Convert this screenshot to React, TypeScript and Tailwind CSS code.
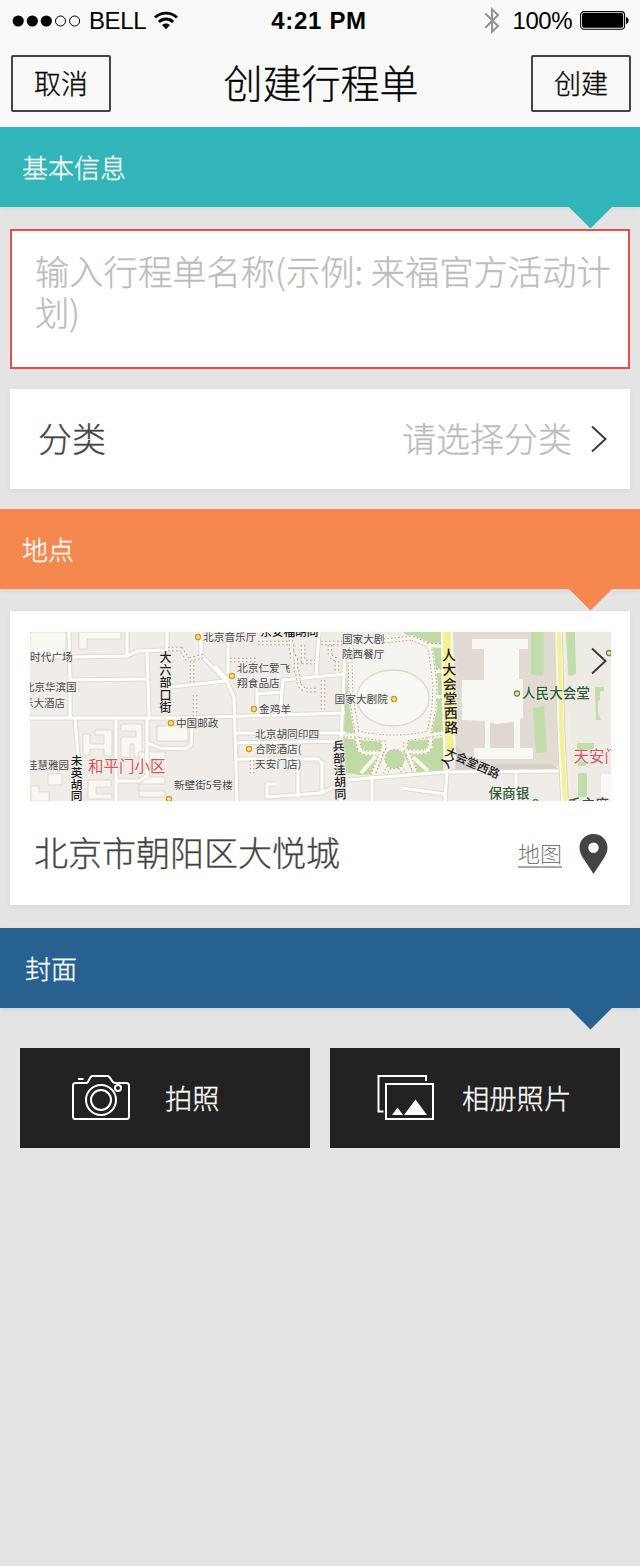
import type { ReactNode } from "react";

function Wifi() {
  return (
    <svg width="26" height="20" viewBox="0 0 26 20" fill="none" stroke="#000" strokeWidth="2.8">
      <path d="M2 6.6C8.2.6 17.8.6 24 6.6" />
      <path d="M5.9 10.9C10 7 16 7 20.1 10.9" />
      <path d="M13 18.2l-4-4.1c2.2-2.2 5.8-2.2 8 0z" fill="#000" stroke="none" />
    </svg>
  );
}

function StatusBar() {
  return (
    <div className="grid h-[41px] grid-cols-[1fr_auto_1fr] items-center pl-3 pr-[11px] text-[24px] leading-none text-black">
      <div className="flex items-center">
        <svg width="69" height="12" viewBox="0 0 69 12">
          {[6.2, 20.3, 34.3].map((x) => (
            <circle key={x} cx={x} cy="6" r="5.6" />
          ))}
          {[48.5, 62.6].map((x) => (
            <circle key={x} cx={x} cy="6" r="5" fill="none" stroke="#000" />
          ))}
        </svg>
        <span className="ml-[8px] w-[57px] tracking-[-0.4px]">BELL</span>
        <span className="ml-[7px]"><Wifi /></span>
      </div>
      <div className="mr-[3px] text-[24px] font-bold tracking-[0.7px]">4:21 PM</div>
      <div className="flex items-center justify-end">
        <svg width="16" height="28" viewBox="0 0 16 28" fill="none" stroke="#929292" strokeWidth="2">
          <path d="M1.3 6.5L14 19l-6 5.7V2.3L14 8 1.3 20.7" />
        </svg>
        <span className="ml-[13px] mr-[8px] tracking-[-0.5px]">100%</span>
        <svg width="49" height="19" viewBox="0 0 49 19">
          <rect x=".6" y=".6" width="44" height="17.6" rx="3.5" fill="none" stroke="#000" strokeWidth="1.1" />
          <rect x="2" y="2" width="41.2" height="14.8" rx="2" />
          <path d="M46 6c3.6 1 3.6 6 0 7z" />
        </svg>
      </div>
    </div>
  );
}

function NavButton({ children }: { children: ReactNode }) {
  return (
    <button className="flex h-[57px] w-[100px] items-center justify-center rounded-[2px] border-2 border-[#444] pb-[2px] text-[27px] leading-none font-light text-black">
      {children}
    </button>
  );
}

function Banner({ label, className }: { label: string; className: string }) {
  return (
    <div className={"relative flex h-[80px] shrink-0 items-center pb-px text-[26px] leading-none font-light text-white shadow-[0_2px_5px_rgba(0,0,0,0.06)] " + className}>
      {label}
      <svg className="absolute top-[79px] left-[569px]" width="43" height="23" viewBox="0 0 43 23">
        <path className="fill-[var(--c)]" d="M0 0h43v1L21.5 22.5 0 1z" />
      </svg>
    </div>
  );
}

function Chevron() {
  return (
    <svg width="18" height="28" viewBox="0 0 18 28" fill="none" stroke="#3c3c3c" strokeWidth="2">
      <path d="M2 1.5L15.5 14 2 26.5" />
    </svg>
  );
}

const roads = [
  "M69 632L70 680V718",
  "M70 657L127 656 138 651 167 650V632",
  "M127 632V656",
  "M70 680L147 679",
  "M147 651L149 718",
  "M30 718H178L345 713",
  "M75 718L79 770",
  "M116 718V801",
  "M147 718L147 743 160 748 185 749 191 745 192 728",
  "M147 743V776L139 781H116",
  "M170 687L225 681",
  "M201 632V655L227 682 234 697 237 801",
  "M215 666L228 680",
  "M228 632V674",
  "M319 632L316 677",
  "M257 694L282 692",
  "M257 680V713",
  "M280 714L283 680 345 674",
  "M236 733H345",
  "M236 743L341 741",
  "M237 759H318L322 763V792",
  "M298 760V797",
  "M278 784H267V797L322 793 346 780 447 772 562 771",
  "M345 650L341 742V801",
  "M372 776V801",
  "M402 788L445 794",
  "M447 770L445 801",
  "M516 772V801",
];

const buildings = [
  "M30 632H66V659H30z",
  "M79 632H121V639H87V649H79z",
  "M83 734H90V744H104V735H95V730H112V756H104V749H90V755H83z",
  "M121 724H142V757H134V744H130V757H121V737H136V731H121z",
  "M157 726H188V741H157z",
  "M88 780H111V787H96V794H112V799H88z",
  "M139 752H165V760H150V766H164V771H148V777H165V784H138V791H165V797H139z",
  "M31 786H39V792H49V801H31z",
  "M48 774H62V785H48z",
];

const dashes = [
  "M168 649H181L188 660 203 656",
  "M192 661V684",
  "M195 695V717",
  "M230 660H256",
  "M258 643H292V660",
  "M291 632V650L296 660V674",
  "M303 645V662H315",
  "M297 670L299 685 305 690H318",
  "M323 680V711",
  "M321 643H345",
  "M330 645V656L337 660V673",
  "M252 760V776",
];

const plazaOutline =
  "M384 641L412 638 426 644Q430 647 431 654L435 685 434 708 429 733Q394 741 357 733L351 696 350 660 352 645";

const parkPaths =
  "M357 737L359 748Q361 753 368 753H381L384 748 383 741M431 737L430 747Q428 752 422 752H408L405 748 406 741M381 754L373 775M408 754L416 774M389 767L385 774M400 767L405 774";

const orangePins: [number, number][] = [
  [198, 637], [171, 723], [169, 799], [232, 676], [254, 709], [249, 749], [394, 699],
];

type Label = [string, number, number, number];
const labels: Label[] = [
  ["时代广场", 30, 660.5, 10.7],
  ["北京华滨国", 24, 691, 10.5],
  ["乐大酒店", 23, 706.5, 10.5],
  ["佳慧雅园", 27, 769, 10.5],
  ["北京音乐厅", 203, 641, 10.7],
  ["中国邮政", 176, 727, 10.6],
  ["新壁街5号楼", 174, 788.5, 10.6],
  ["北京仁爱飞", 237, 671.5, 10.7],
  ["翔食品店", 237, 686.5, 10.7],
  ["金鸡羊", 259, 712.5, 10.7],
  ["北京胡同印四", 255, 738, 10.7],
  ["合院酒店(", 255, 753, 10.7],
  ["天安门店)", 255, 768, 10.7],
  ["国家大剧", 342, 643, 10.6],
  ["院西餐厅", 342, 658, 10.6],
  ["国家大剧院", 334.5, 702.5, 10.7],
];

function Street({ text, x, y, size, tilt = 0, gap = 0, halo = "#f2efea" }: { text: string; x: number; y: number; size: number; tilt?: number; gap?: number; halo?: string }) {
  return (
    <text
      x={x}
      y={y}
      fontSize={size}
      letterSpacing={gap}
      fill="#1c1c1c"
      stroke={halo}
      strokeWidth="1.4"
      paintOrder="stroke"
      className="font-medium [writing-mode:vertical-rl]"
      transform={`rotate(${tilt} ${x} ${y})`}
    >
      {text}
    </text>
  );
}

function CityMap() {
  return (
    <svg className="block font-normal" width="581" height="169" viewBox="30 632 581 169">
      <rect x="30" y="632" width="581" height="169" fill="#f0ece7" />
      <g fill="#faf8f3" stroke="#dedacd" strokeWidth="1">
        {buildings.map((d) => <path key={d} d={d} />)}
      </g>

      <path d="M348 660L343 738 346 773 360 775 443 771V632H403L410 638 425 660z" fill="#bddba3" />
      <path d={plazaOutline + "z"} fill="#f5f3ed" stroke="#f8f5ee" strokeWidth="6" />
      <path d="M345 735Q394 743 443 734" fill="none" stroke="#f8f5ee" strokeWidth="6" />
      <path d={plazaOutline} fill="none" stroke="#b8a593" strokeWidth="5" strokeDasharray="1.6 2" />
      <path d="M343 735L357 735Q394 743 430 735L443 733" fill="none" stroke="#b8a593" strokeWidth="5" strokeDasharray="1.6 2" />
      <path d={plazaOutline} fill="none" stroke="#f8f5ee" strokeWidth="3" />
      <path d="M343 735L357 735Q394 743 430 735L443 733" fill="none" stroke="#f8f5ee" strokeWidth="3" />
      <path d="M383 740H406L403 752 413 775H376L385 752z" fill="#f6f3ec" />
      <g fill="none">
        <path d={parkPaths} stroke="#f8f5ee" strokeWidth="5" />
        <path d={parkPaths} stroke="#b8a593" strokeWidth="5" strokeDasharray="1.6 2" />
        <path d={parkPaths} stroke="#f8f5ee" strokeWidth="3" />
        <circle cx="394.5" cy="759" r="9.5" fill="#bddba3" stroke="#b8a593" strokeDasharray="1.6 2" />
        <path d="M361 773L376 756M413 757L428 771" stroke="#f8f5ee" strokeWidth="4" />
      </g>
      <ellipse cx="393" cy="698" rx="36" ry="28" fill="#f9f8f4" stroke="#dedaca" strokeWidth="1.3" />

      <path d="M451 632H557L559 760Q558 770 550 771L458 774 452 750z" fill="#e1dbd3" />
      <path d="M455 772L560 770 551 764H475L456 745z" fill="#d6d0c8" />
      <path d="M472 639H528V649H519V679H523V718H520V748H533V759H474V748H485V721L462 720V680H484V649H472z" fill="#f8f7f2" />
      <path d="M490 722L496 724 514 722V748H490z" fill="#dfd8cf" />
      <path d="M567 632H611V801H571z" fill="#eeebe5" />
      <path d="M601 774H611V801H601z" fill="#fbf9f6" />
      <g fill="#c0dea9">
        <rect x="531" y="628" width="12.5" height="47" rx="2" />
        <path d="M533 708l11-2 3 46-11 1z" />
        <path d="M566 632h9l1 42q-6 3-8 0z" />
        <path d="M595 687h9v4h-4v8l-2 3v12l3 6h-5z" />
        <rect x="577" y="743" width="17" height="7" />
        <rect x="578" y="773" width="9" height="24" rx="2" />
        <rect x="578" y="760" width="8" height="6" />
      </g>

      <g fill="none" strokeLinejoin="round">
        {roads.map((d) => <path key={d} d={d} stroke="#e0dccb" strokeWidth="5.2" />)}
        {roads.map((d) => <path key={"w" + d} d={d} stroke="#fff" strokeWidth="3" />)}
        {dashes.map((d) => <path key={d} d={d} stroke="#aea382" strokeWidth="4.6" strokeDasharray="1.6 2.4" />)}
        {dashes.map((d) => <path key={"w" + d} d={d} stroke="#f5f2ed" strokeWidth="2.4" />)}
        <path d="M427 645L443 646M436 671H443M436 697H443" stroke="#f8f5ee" strokeWidth="4" />
        <path d="M427 643L443 644M436 669H443M436 699H443" stroke="#b5a894" strokeDasharray="2 2" />
        <path d="M447 632L448 700 450 760" stroke="#fff" strokeWidth="12" />
        <path d="M447 632L448 700 450 755" stroke="#f5ef95" strokeWidth="8.5" />
        <path d="M558.5 632L561 730 564.5 801" stroke="#ddd5ba" strokeWidth="8.5" />
        <path d="M558.5 632L561 730 564.5 801" stroke="#fff" strokeWidth="6.5" />
        <path d="M559 632L561.5 730 565 801" stroke="#f5f09c" strokeWidth="4.6" />
      </g>

      {orangePins.map(([x, y]) => (
        <circle key={x} cx={x} cy={y} r="2.5" fill="#fff2a0" stroke="#d99a26" strokeWidth="1.5" />
      ))}
      <g fill="#eef0a0" stroke="#628f43" strokeWidth="1.3">
        <circle cx="517" cy="693.5" r="2.5" />
        <circle cx="609" cy="653" r="2.5" />
        <circle cx="535.5" cy="802" r="2.5" />
      </g>

      <g fill="#48494e" stroke="#f3f0eb" strokeWidth="1.2" paintOrder="stroke">
        {labels.map(([t, x, y, s]) => <text key={t} x={x} y={y} fontSize={s}>{t}</text>)}
      </g>
      <text x="260" y="636" fontSize="11.7" fill="#1c1c1c" className="font-medium">东安福胡同</text>
      <Street text="大六部口街" x={165.5} y={651.5} size={12} gap={0.5} />
      <Street text="未英胡同" x={76.5} y={755} size={11.7} />
      <Street text="兵部洼胡同" x={338.5} y={740} size={12} tilt={-2} />
      <Street text="人大会堂西路" x={448.5} y={648} size={14} gap={0.5} tilt={-2} halo="#f7f2b0" />
      <text x="441" y="766" fontSize="12" fill="#1c1c1c" className="font-medium" transform="rotate(-65 447 762)">人</text>
      <text x="444" y="755" fontSize="11.7" fill="#1c1c1c" className="font-medium" transform="rotate(24 444 755)">大会堂西路</text>
      <g fill="#2f5c38" stroke="#f3f1ea" strokeWidth="1.5" paintOrder="stroke" className="font-medium">
        <text x="522" y="698" fontSize="13.6">人民大会堂</text>
        <text x="488.5" y="798" fontSize="13.6">保商银</text>
        <text x="568" y="808.5" fontSize="13.6">毛主席</text>
      </g>
      <g fill="#d9535b" stroke="#f6f1ec" strokeWidth="1.5" paintOrder="stroke">
        <text x="88" y="772" fontSize="15.5">和平门小区</text>
        <text x="573.5" y="761.5" fontSize="15.5">天安门</text>
      </g>
    </svg>
  );
}

export default function App() {
  return (
    <div className="flex h-[1566px] w-[640px] flex-col overflow-hidden bg-[#e4e4e4] font-['Liberation_Sans','Noto_Sans_CJK_SC',sans-serif]">
      <header className="h-[127px] shrink-0 bg-[#f9f9f9]">
        <StatusBar />
        <div className="mt-[14px] flex items-start justify-between pl-[11px] pr-[9px] font-['Noto_Sans_CJK_SC',sans-serif] [-webkit-text-stroke:0.3px]">
          <NavButton>取消</NavButton>
          <h1 className="mt-[6px] text-[39px] leading-[40px] font-light text-black">创建行程单</h1>
          <NavButton>创建</NavButton>
        </div>
      </header>

      <main className="flex flex-col font-['Noto_Sans_CJK_SC',sans-serif] font-light [-webkit-text-stroke:0.3px]">
        <Banner label="基本信息" className="bg-[#31b5b8] pl-[22px] [--c:#31b5b8]" />
        <div className="mx-[10px] mt-[22px] h-[140px] border-2 border-[#e94f3f] bg-white pt-[19px] pl-[23px] text-[34.3px] leading-[41px] whitespace-nowrap text-[#bcbcbc]">
          输入行程单名称(示例: 来福官方活动计<br />划)
        </div>
        <div className="mx-[10px] mt-[20px] mb-[20px] flex h-[100px] items-center bg-white pr-[22px] pl-[28px] text-[34px] leading-none shadow-[0_2px_5px_rgba(0,0,0,0.05)]">
          <span className="mb-[3px] text-[#444]">分类</span>
          <span className="mb-[3px] ml-auto mr-[18px] text-[#bcbcbc]">请选择分类</span>
          <Chevron />
        </div>

        <Banner label="地点" className="bg-[#f5884f] pl-[22px] [--c:#f5884f]" />
        <div className="mx-[10px] mt-[22px] h-[294px] bg-white pt-[21px] shadow-[0_2px_5px_rgba(0,0,0,0.05)]">
          <div className="relative ml-[20px] w-[581px] shadow-[0_0_6px_rgba(0,0,0,0.04)]">
            <CityMap />
            <span className="absolute top-[15px] left-[560px]"><Chevron /></span>
          </div>
          <div className="flex h-[104px] items-center pr-[22px] pl-[24px]">
            <span className="mb-[3px] text-[34px] leading-none text-[#444]">北京市朝阳区大悦城</span>
            <span className="mt-[4px] mr-[17px] ml-auto border-b-2 border-[#aaa] text-[22px] leading-[24px] text-[#777] [-webkit-text-stroke:0]"><span className="-mt-[2px] block pb-[2px]">地图</span></span>
            <svg className="mt-[2px]" width="29" height="41" viewBox="0 0 29 41">
              <path d="M14.5 0C6.5 0 .5 6 .5 13.7c0 3.5 1.2 6.3 2.9 9.2L14.5 40l11.1-17.1c1.7-2.9 2.9-5.7 2.9-9.2C28.5 6 22.5 0 14.5 0zm0 8.6a5.2 5.2 0 1 1 0 10.4 5.2 5.2 0 0 1 0-10.4z" fill="#444" fillRule="evenodd" />
            </svg>
          </div>
        </div>

        <Banner label="封面" className="mt-[23px] bg-[#26618f] pl-[25px] [--c:#26618f]" />
        <div className="mx-[20px] mt-[40px] grid grid-cols-2 gap-[20px] text-[27.3px] leading-none text-white">
          <button className="flex h-[100px] items-center bg-[#222] pl-[51px]">
            <svg className="-mt-[2px]" width="60" height="46" viewBox="0 0 60 46" fill="none" stroke="#fff" strokeWidth="2">
              <path d="M43.5 9H55.500Q58 9 58 11.500V42.500Q58 45 55.500 45H4.500Q2 45 2 42.500V11.500Q2 9 4.500 9H15.500C18 9 18 3 21 2H37C40 3 40 8 43.500 9M7 5h5.500" />
              <circle cx="30" cy="26" r="15" />
              <circle cx="30" cy="26" r="10" />
              <circle cx="47" cy="14" r="3" fill="#222" />
            </svg>
            <span className="mb-px ml-[34px]">拍照</span>
          </button>
          <button className="flex h-[100px] items-center bg-[#222] pl-[47px]">
            <svg className="-mt-[2px]" width="57" height="46" viewBox="0 0 57 46" fill="none" stroke="#fff" strokeWidth="2">
              <path d="M6.5 37.5H1.500V2H49V7" />
              <rect x="9" y="10" width="47" height="35" />
              <path d="M15 41L20.5 33.5 26 41zM27 41L38.5 25.5 50 41z" fill="#fff" stroke="none" />
            </svg>
            <span className="mb-px ml-[28px]">相册照片</span>
          </button>
        </div>
      </main>
    </div>
  );
}
